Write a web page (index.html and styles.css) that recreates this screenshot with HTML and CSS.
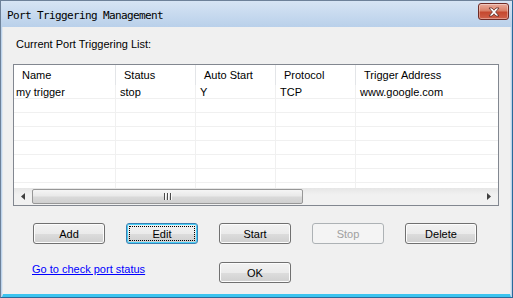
FILE: index.html
```html
<!DOCTYPE html>
<html>
<head>
<meta charset="utf-8">
<link rel="stylesheet" href="styles.css">
</head>
<body>
<div class="window">
  <div class="titlebar">
    <span class="title">Port Triggering Management</span>
    <button class="close" aria-label="Close">
      <svg width="16" height="10" viewBox="0 0 16 10">
        <path d="M3 1 L6 1 L8 3.2 L10 1 L13 1 L9.6 5 L13 9 L10 9 L8 6.8 L6 9 L3 9 L6.4 5 Z" fill="#fff" stroke="#5a2a24" stroke-width="0.8" stroke-linejoin="round"/>
      </svg>
    </button>
  </div>
  <div class="client">
    <div class="label">Current Port Triggering List:</div>
    <div class="list">
      <div class="row header">
        <div class="cell">Name</div>
        <div class="cell">Status</div>
        <div class="cell">Auto Start</div>
        <div class="cell">Protocol</div>
        <div class="cell">Trigger Address</div>
      </div>
      <div class="rows">
        <div class="row data">
          <div class="cell">my trigger</div>
          <div class="cell">stop</div>
          <div class="cell">Y</div>
          <div class="cell">TCP</div>
          <div class="cell">www.google.com</div>
        </div>
        <div class="row data"><div class="cell"></div><div class="cell"></div><div class="cell"></div><div class="cell"></div><div class="cell"></div></div>
        <div class="row data"><div class="cell"></div><div class="cell"></div><div class="cell"></div><div class="cell"></div><div class="cell"></div></div>
        <div class="row data"><div class="cell"></div><div class="cell"></div><div class="cell"></div><div class="cell"></div><div class="cell"></div></div>
        <div class="row data"><div class="cell"></div><div class="cell"></div><div class="cell"></div><div class="cell"></div><div class="cell"></div></div>
        <div class="row data"><div class="cell"></div><div class="cell"></div><div class="cell"></div><div class="cell"></div><div class="cell"></div></div>
        <div class="row data"><div class="cell"></div><div class="cell"></div><div class="cell"></div><div class="cell"></div><div class="cell"></div></div>
        <div class="row data"><div class="cell"></div><div class="cell"></div><div class="cell"></div><div class="cell"></div><div class="cell"></div></div>
      </div>
      <div class="hscroll">
        <div class="arrow">
          <svg width="4" height="7" viewBox="0 0 4 7"><path d="M4 0 L0 3.5 L4 7 Z" fill="#404040"/></svg>
        </div>
        <div class="track">
          <div class="thumb">
            <span class="grip"></span><span class="grip"></span><span class="grip"></span>
          </div>
        </div>
        <div class="arrow">
          <svg width="4" height="7" viewBox="0 0 4 7"><path d="M0 0 L4 3.5 L0 7 Z" fill="#404040"/></svg>
        </div>
      </div>
    </div>
    <div class="buttons">
      <button class="btn">Add</button>
      <button class="btn default"><span class="focus">Edit</span></button>
      <button class="btn">Start</button>
      <button class="btn disabled">Stop</button>
      <button class="btn">Delete</button>
      <a class="link" href="#">Go to check port status</a>
      <button class="btn ok">OK</button>
    </div>
  </div>
</div>
</body>
</html>
```

FILE: styles.css
```css
html, body {
  margin: 0;
  padding: 0;
  background: #f0f0f0;
}

.window {
  width: 513px;
  height: 298px;
  box-sizing: border-box;
  display: flex;
  flex-direction: column;
  border-left: 1px solid #6d8199;
  border-top: 1px solid #6d8199;
  border-right: 1px solid #2a6a9a;
  border-bottom: 1px solid #2a6a9a;
  background: #bcd3ec;
  font-family: "Liberation Sans", Arial, sans-serif;
  font-size: 11px;
  color: #000;
}

.titlebar {
  height: 26px;
  flex: none;
  display: flex;
  align-items: center;
  justify-content: space-between;
  padding: 0 3px 0 6px;
  background: linear-gradient(#d6e4f4, #b9d0ea);
}

.title {
  font-family: "DejaVu Sans Mono", "Liberation Mono", monospace;
  font-size: 11px;
  letter-spacing: -0.62px;
  color: #000;
  margin-top: 2px;
}

.close {
  width: 31px;
  height: 17px;
  margin-top: -5px;
  padding: 0;
  border: 1px solid #6e2b26;
  border-radius: 3px;
  background: linear-gradient(#e9ab9c 0%, #d98068 45%, #c5482f 55%, #d0614a 100%);
  box-shadow: inset 0 0 0 1px rgba(255,255,255,0.35);
  display: flex;
  align-items: center;
  justify-content: center;
}

.client {
  flex: 1;
  margin: 0 1px 0 1px;
  background: #f0f0f0;
  border-right: 1px solid #dfe7ef;
  border-bottom: 3px solid #3cc4ef;
  border-left: 1px solid #dfe7ef;
  display: flex;
  flex-direction: column;
  padding: 10px 0 0 0;
}

.label {
  line-height: 14px;
  padding-left: 13px;
}

.list {
  margin: 13px 0 0 10px;
  width: 486px;
  height: 142px;
  box-sizing: border-box;
  border: 1px solid #828790;
  background: #fff;
  display: flex;
  flex-direction: column;
}

.row {
  display: grid;
  grid-template-columns: 102px 80px 80px 80px 1fr;
}

.header {
  height: 20px;
  flex: none;
}

.header .cell {
  padding-left: 8px;
  line-height: 20px;
  border-right: 1px solid #e3e5e8;
}

.header .cell:last-child {
  border-right: none;
}

.rows {
  flex: 1;
  overflow: hidden;
}

.data {
  height: 13px;
  border-bottom: 1px solid #f0f0f0;
  box-sizing: content-box;
}

.data .cell {
  padding-left: 4px;
  line-height: 15px;
  border-right: 1px solid #f0f0f0;
  white-space: nowrap;
}

.data .cell:first-child {
  padding-left: 2px;
}

.data .cell:last-child {
  border-right: none;
}

.hscroll {
  height: 17px;
  flex: none;
  display: flex;
  background: linear-gradient(#e6e6e6, #f1f1f1 40%, #f1f1f1);
}

.arrow {
  width: 18px;
  display: flex;
  align-items: center;
  justify-content: center;
}

.track {
  flex: 1;
  display: flex;
  padding: 1px 0;
}

.thumb {
  width: 271px;
  box-sizing: border-box;
  border: 1px solid #979797;
  border-radius: 2px;
  background: linear-gradient(#f5f5f5, #e9e9e9 45%, #d9d9d9 55%, #d0d0d0);
  display: flex;
  align-items: center;
  justify-content: center;
  gap: 1px;
}

.grip {
  width: 1px;
  height: 7px;
  background: #4a4a4a;
  box-shadow: 1px 0 0 #fafafa;
  margin-right: 1px;
}

.buttons {
  display: grid;
  grid-template-columns: repeat(5, 72px);
  column-gap: 21px;
  row-gap: 18px;
  margin: 17px 0 0 30px;
}

.btn {
  height: 21px;
  padding: 0;
  border: 1px solid #707070;
  border-radius: 3px;
  background: linear-gradient(#f2f2f2 0%, #ebebeb 50%, #dddddd 51%, #cfcfcf 100%);
  box-shadow: inset 0 0 0 1px #fcfcfc;
  font-family: "Liberation Sans", Arial, sans-serif;
  font-size: 11px;
  color: #000;
  display: flex;
  align-items: center;
  justify-content: center;
}

.btn.default {
  border-color: #3c7fb1;
  box-shadow: inset 0 0 0 1px #48d0f8;
}

.focus {
  align-self: stretch;
  flex: 1;
  margin: 2px;
  border: 1px dotted #000;
  display: flex;
  align-items: center;
  justify-content: center;
}

.btn.disabled {
  border-color: #adb2b5;
  background: #f4f4f4;
  box-shadow: none;
  color: #a0a0a0;
}

.link {
  grid-column: 1 / 3;
  align-self: center;
  margin-left: -1px;
  margin-top: -8px;
  color: #0000ff;
  text-decoration: underline;
}

.btn.ok {
  grid-column: 3;
}
```
